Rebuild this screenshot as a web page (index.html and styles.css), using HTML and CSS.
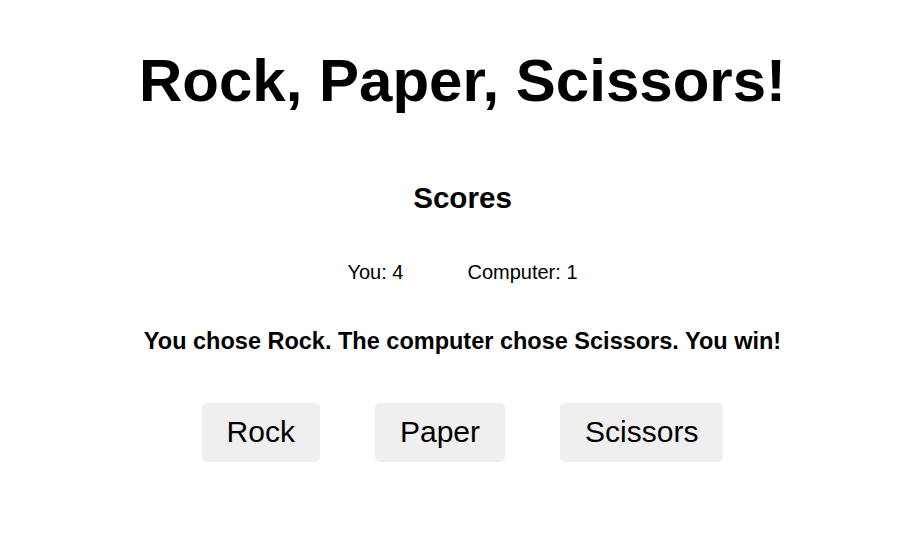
FILE: index.html
```html
<!DOCTYPE html>
<html lang="en">
<head>
<meta charset="utf-8">
<title>Rock, Paper, Scissors!</title>
<link rel="stylesheet" href="styles.css">
</head>
<body>
<main class="game">
  <h1 class="title">Rock, Paper, Scissors!</h1>
  <h2 class="scores-title">Scores</h2>
  <div class="scores">
    <span class="score">You: 4</span>
    <span class="score">Computer: 1</span>
  </div>
  <p class="result">You chose Rock. The computer chose Scissors. You win!</p>
  <div class="choices">
    <button class="choice">Rock</button>
    <button class="choice">Paper</button>
    <button class="choice">Scissors</button>
  </div>
</main>
</body>
</html>
```
FILE: styles.css
```css
html, body {
  margin: 0;
  padding: 0;
  background: #ffffff;
}
body {
  font-family: "Liberation Sans", Arial, sans-serif;
  color: #000000;
  padding-left: 5px;
}
.game {
  display: flex;
  flex-direction: column;
  align-items: center;
  text-align: center;
}
.title {
  font-size: 60px;
  line-height: 70px;
  font-weight: bold;
  margin: 46px 0 0;
}
.scores-title {
  font-size: 29.6px;
  line-height: 34px;
  font-weight: bold;
  margin: 65px 0 0;
}
.scores {
  display: flex;
  gap: 64px;
  font-size: 20px;
  line-height: 24px;
  margin-top: 45px;
}
.result {
  font-size: 23.5px;
  line-height: 28px;
  font-weight: bold;
  margin: 43px 0 0;
}
.choices {
  display: flex;
  gap: 55px;
  margin-top: 48px;
}
.choice {
  font-family: "Liberation Sans", Arial, sans-serif;
  font-size: 30px;
  line-height: 34px;
  padding: 12px 25px 13px;
  border: none;
  border-radius: 5px;
  background: #efefef;
  color: #000000;
}
```
